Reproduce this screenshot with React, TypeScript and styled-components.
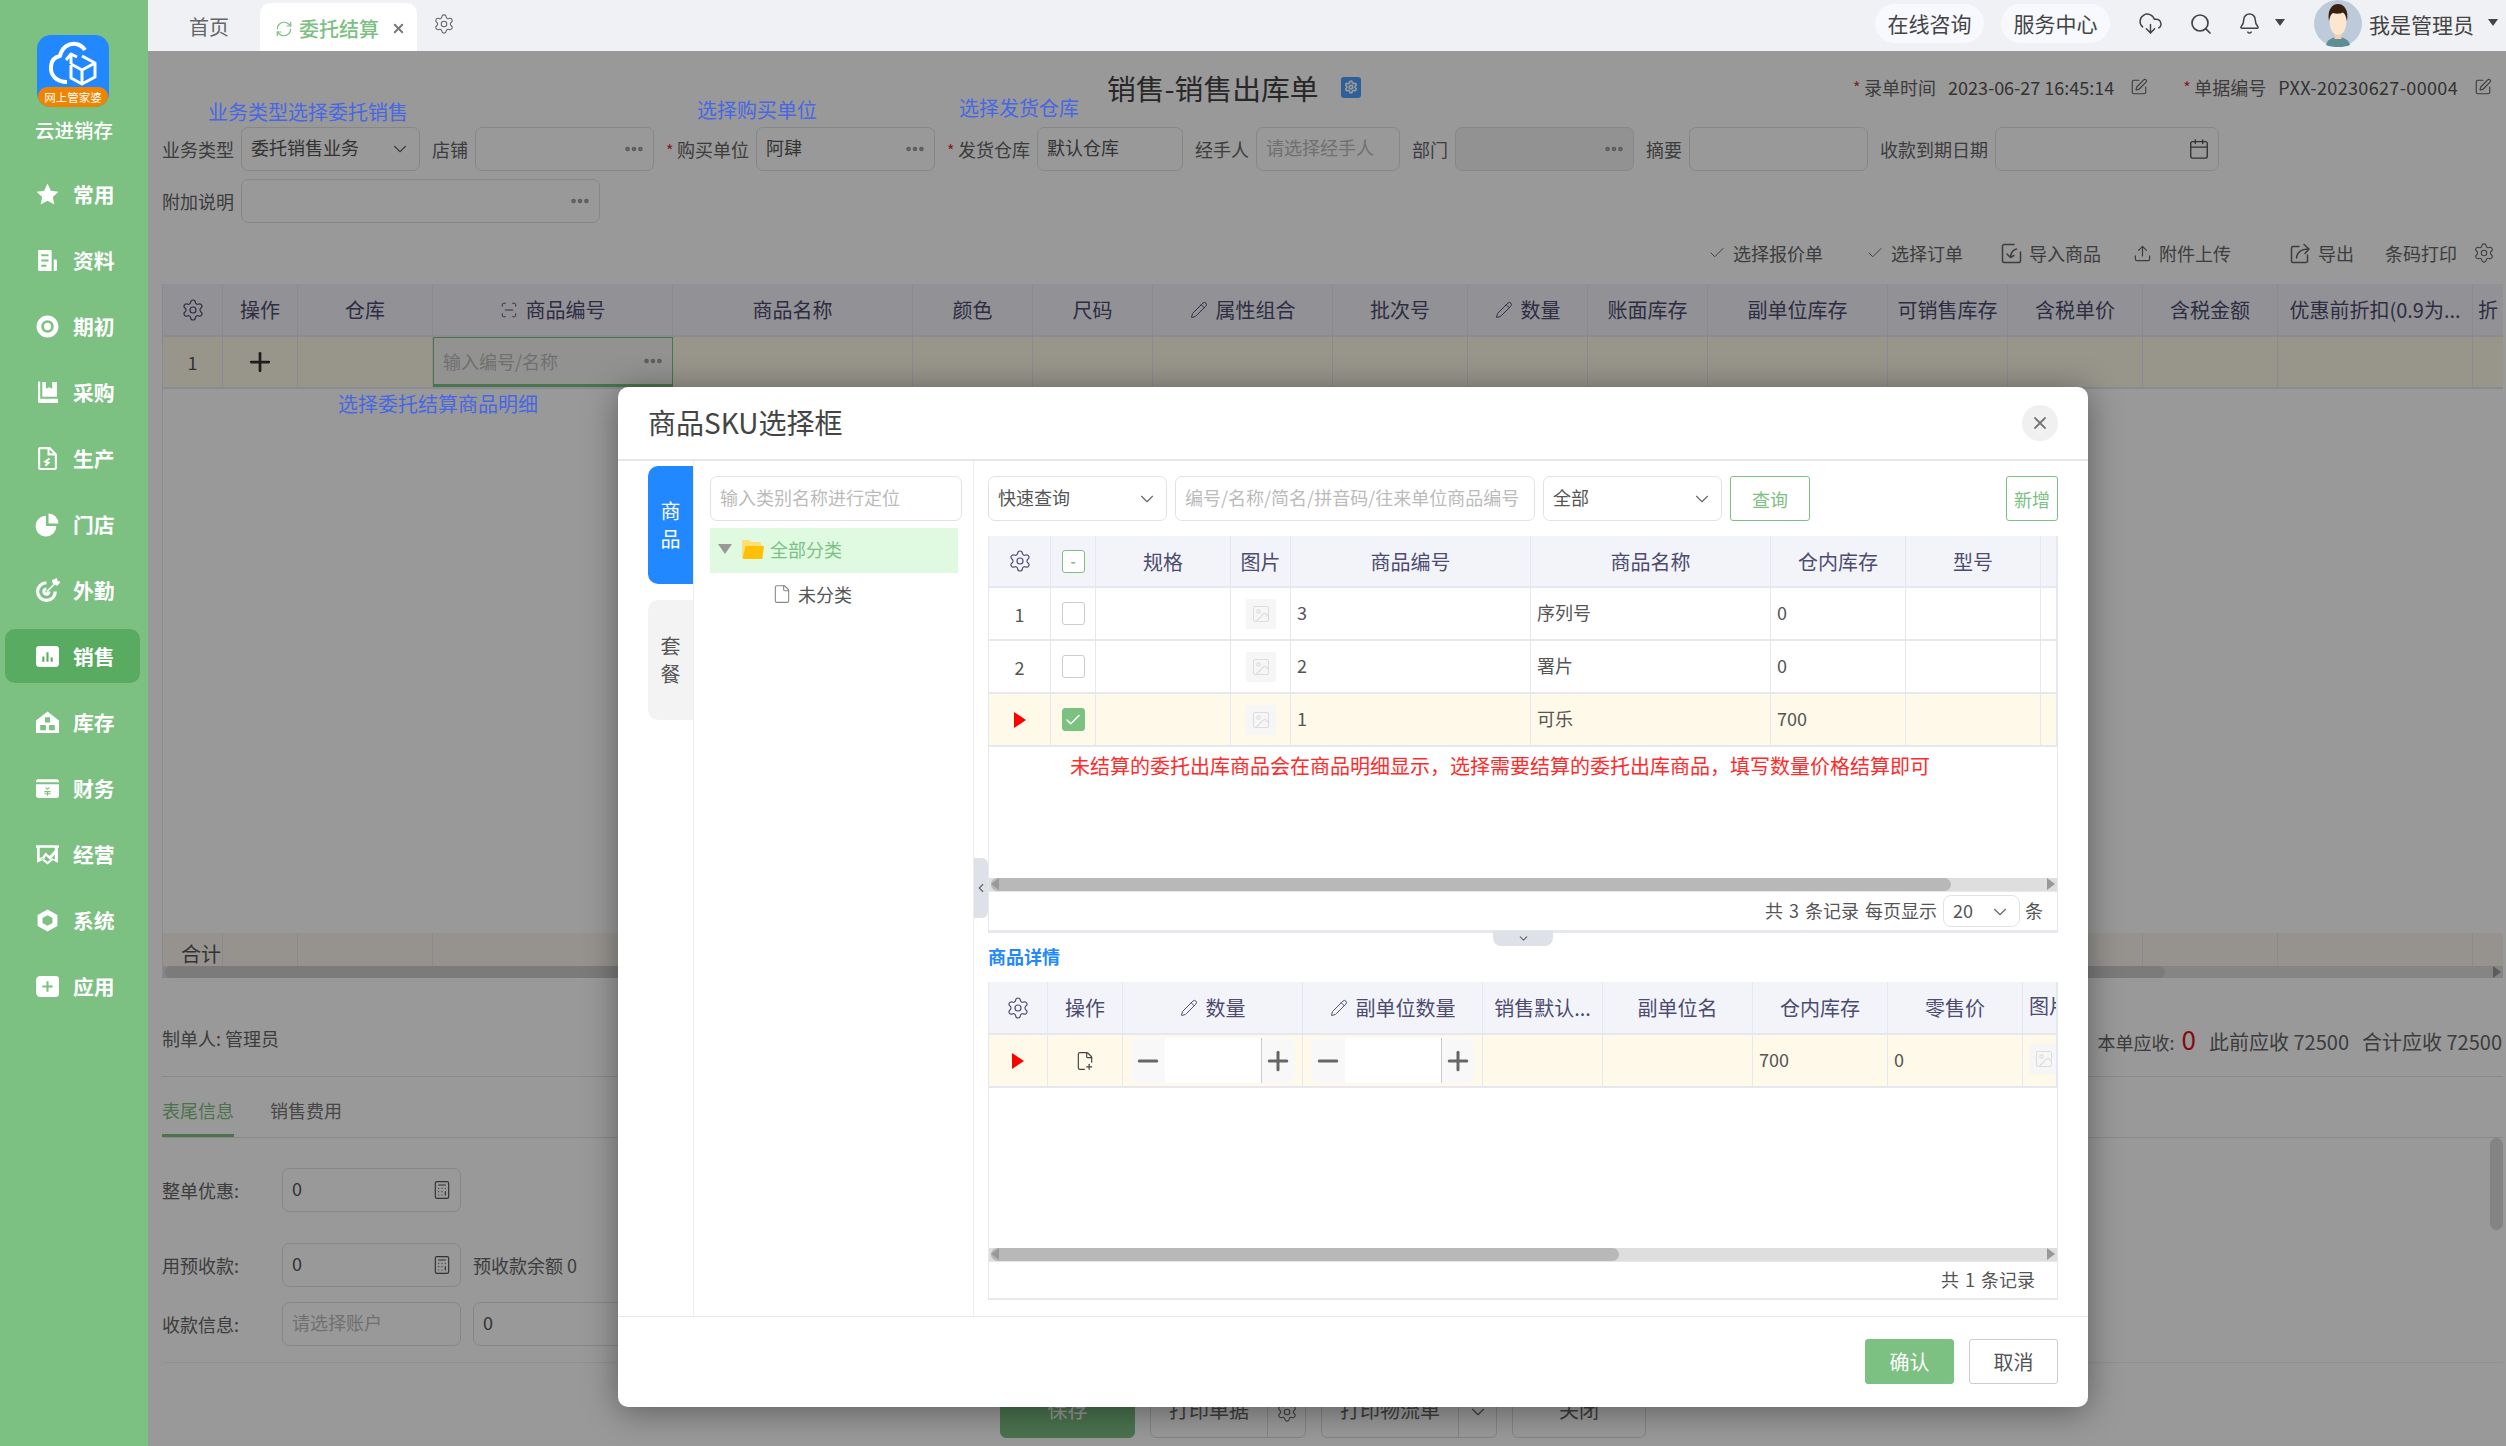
import React, { FC, ReactNode } from 'react'
import styled, { createGlobalStyle } from 'styled-components'
import {
  Bell,
  Calculator,
  Calendar,
  Check,
  ChevronDown,
  ChevronLeft,
  CloudDownload,
  Ellipsis,
  File,
  FilePlus2,
  Image,
  Minus,
  Pencil,
  Plus,
  RefreshCw,
  ScanLine,
  Search,
  Settings,
  SquarePen,
  Upload,
  X,
} from 'lucide-react'

const green = '#7cc082'
const blue = '#2288ff'

const GlobalStyle = createGlobalStyle`
  html, body { margin: 0; padding: 0; height: 100%; }
  body {
    font-family: "Noto Sans CJK SC", "Liberation Sans", sans-serif;
    font-size: 18px;
    color: #555;
    background: #fff;
    overflow: hidden;
  }
  * { box-sizing: border-box; }
`

const Shell = styled.div`
  display: flex;
  width: 2506px;
  height: 1446px;
  overflow: hidden;
`

/* ---------- sidebar ---------- */

const Sidebar = styled.aside`
  flex: 0 0 148px;
  background: ${green};
  padding-top: 35px;
  color: #fff;
`

const Logo = styled.div`
  position: relative;
  width: 72px;
  height: 72px;
  margin-left: 37px;
  border-radius: 14px;
  background: ${blue};
  overflow: hidden;
`

const LogoBand = styled.div`
  position: absolute;
  left: 1px;
  right: 1px;
  bottom: 0;
  height: 20px;
  border-radius: 12px 12px 14px 14px;
  background: #f08300;
  font-size: 11.5px;
  line-height: 20px;
  text-align: center;
  white-space: nowrap;
`

const BrandName = styled.div`
  margin-top: 9px;
  height: 28px;
  line-height: 28px;
  text-align: center;
  font-size: 19.5px;
  font-weight: 500;
`

const Nav = styled.nav`
  margin-top: 23px;
`

const NavItem = styled.div<{ $active?: boolean }>`
  display: flex;
  align-items: center;
  gap: 13px;
  height: 54px;
  margin: 0 8px 12px 5px;
  padding-left: 30px;
  border-radius: 10px;
  background: ${(p) => (p.$active ? '#58ab60' : 'transparent')};
  font-size: 20.8px;
  font-weight: 700;
`

const NavSvg = styled.svg`
  width: 25px;
  height: 25px;
  fill: #fff;
  fill-rule: evenodd;
  flex: none;
`

const navItems: { name: string; icon: ReactNode; active?: boolean }[] = [
  { name: '常用', icon: <path d="M12 1.5l3.2 7 7.3.8-5.4 5 1.5 7.4L12 18l-6.6 3.7 1.5-7.4-5.4-5 7.3-.8z" /> },
  { name: '资料', icon: <path d="M3 2h12a1 1 0 011 1v19H4a1 1 0 01-1-1zM6 6v2h7V6zM6 11v2h7v-2zM6 16v2h5v-2zM18 11h2a1 1 0 011 1v9a1 1 0 01-1 1h-2z" /> },
  { name: '期初', icon: <path d="M12 1.5a10.5 10.5 0 100 21 10.5 10.5 0 000-21zM12 6a6 6 0 110 12 6 6 0 010-12zM12 8.5a3.5 3.5 0 100 7 3.5 3.5 0 000-7z" /> },
  { name: '采购', icon: <path d="M3 1.5h2V18h17v4H4a1 1 0 01-1-1zM7 2h14v14H7zM10.5 2v6.5l3-1.5 3 1.5V2z" /> },
  {
    name: '生产',
    icon: (
      <g fill="none" stroke="#fff" strokeWidth="2">
        <path d="M5 2h9l6 6v13a1 1 0 01-1 1H5a1 1 0 01-1-1V3a1 1 0 011-1z" />
        <path d="M13 2v6h7M14 12l-4 3 3 1-3 3" />
      </g>
    ),
  },
  { name: '门店', icon: <path d="M10.5 3.5v10h10A10 10 0 1110.5 3.5zM13 1.5a9.5 9.5 0 019.5 9.5H13z" /> },
  {
    name: '外勤',
    icon: (
      <g>
        <path d="M11 3a10 10 0 1010 10h-3a7 7 0 11-7-7zM11 9a4 4 0 104 4h-3a1 1 0 11-1-1z" />
        <path d="M11.5 13L19 5.5M17 2.5l1 3 3 1 2.5-2.5-2.5-.5-.5-2.5z" stroke="#fff" strokeWidth="1.5" />
      </g>
    ),
  },
  { name: '销售', active: true, icon: <path d="M4 2h16a3 3 0 013 3v14a3 3 0 01-3 3H4a3 3 0 01-3-3V5a3 3 0 013-3zM7 12v5h2v-5zM11 8v9h2V8zM15 13v4h2v-4z" /> },
  { name: '库存', icon: <path d="M12 1.5l11 8.5v12H1V10zM9.5 7v5h5V7zM5 14.5v5h5.5v-5zM13.5 14.5v5H19v-5z" /> },
  { name: '财务', icon: <path d="M3 3h18a2 2 0 012 2v1H1V5a2 2 0 012-2zM1 8h22v11a2 2 0 01-2 2H3a2 2 0 01-2-2zM9.5 11l2.5 2.5 2.5-2.5H13l-1 1-1-1zM9 14.5v1h2.5v1H9v1h2.5V19h1v-1.5H15v-1h-2.5v-1H15v-1z" /> },
  { name: '经营', icon: <path d="M1 3h22v2.5H22V20l-5-2.5-5 4-5-4-5 2.5V5.500H1zM4.500 5.500v10l3-1.500 2.500-4 4 3.500 5-5.500V5.500zM5 16.800l2.500-1.300 4.500 3.500 4.500-3.500 2.500 1.300V12l-4.500 5-4-3.500-2 3z" /> },
  { name: '系统', icon: <path d="M12 1.500l9.500 5.250v10.500L12 22.500l-9.500-5.250V6.750zM12 7l-4.800 2.600v4.800L12 17l4.800-2.600V9.600z" /> },
  { name: '应用', icon: <path d="M5 2h15a3 3 0 013 3v14a3 3 0 01-3 3H5a4 4 0 01-4-4V6a4 4 0 014-4zM11 7v4H7v2h4v4h2v-4h4v-2h-4V7z" /> },
]

/* ---------- top bar ---------- */

const Main = styled.div`
  flex: 1;
  min-width: 0;
  display: flex;
  flex-direction: column;
`

const TopBar = styled.header`
  flex: 0 0 51px;
  min-height: 0;
  display: flex;
  align-items: stretch;
  padding-right: 8px;
  background: #f0f1f5;
  color: #444;
  font-size: 20px;
`

const HomeTab = styled.div`
  width: 112px;
  padding: 10px 0 0 41px;
  line-height: 34px;
  color: #666;
`

const ActiveTab = styled.div`
  display: flex;
  align-items: center;
  width: 157px;
  margin-top: 3px;
  padding: 3px 0 0 15px;
  border-radius: 10px 10px 0 0;
  background: #fff;
  color: ${green};
  font-weight: 500;
`

const TabTitle = styled.span`
  margin: 0 12px 0 6px;
`

const TabGear = styled.div`
  margin: 12px 0 0 16px;
  color: #666;
`

const TopRight = styled.div`
  display: flex;
  align-items: center;
  margin-left: auto;
  font-size: 21px;
  color: #444;
`

const Pill = styled.div`
  width: 109px;
  height: 39px;
  margin: 0 17px 4px 0;
  border-radius: 20px;
  background: #f7f9ff;
  line-height: 38px;
  text-align: center;
`

const UserName = styled.span`
  margin-bottom: 4px;
`

const TopIcon = styled.div<{ $ml: number }>`
  display: flex;
  margin: 0 0 4px ${(p) => p.$ml}px;
  color: #444;
`

const Caret = styled.span<{ $ml: number }>`
  margin: 0 0 6px ${(p) => p.$ml}px;
  border-left: 5px solid transparent;
  border-right: 5px solid transparent;
  border-top: 7px solid #444;
`

const Avatar = styled.svg`
  width: 48px;
  height: 47px;
  margin: 0 7px 4px 29px;
  flex: none;
`

/* ---------- page under the dialog ---------- */

const Content = styled.main`
  position: relative;
  flex: 1;
  min-height: 0;
  overflow: hidden;
`

const Sheet = styled.div`
  display: flex;
  flex-direction: column;
  height: 100%;
  padding: 0 3px 0 14px;
`

const TitleRow = styled.div`
  display: flex;
  align-items: center;
  height: 40px;
  margin-top: 16px;
`

const PageTitle = styled.h1`
  margin: 0 0 0 945px;
  font-size: 28.8px;
  font-weight: 400;
  color: #444;
`

const TitleBadge = styled.div`
  display: flex;
  align-items: center;
  justify-content: center;
  width: 20px;
  height: 21px;
  margin-left: 22px;
  border-radius: 3px;
  background: #4f9eff;
  color: #fff;
`

const Meta = styled.div`
  display: flex;
  align-items: center;
  margin-left: auto;
  padding-right: 11px;
  color: #666;
`

const Star = styled.span`
  display: inline-block;
  width: 11px;
  color: #e03030;
  font-size: 16px;
`

const MetaValue = styled.span<{ $track?: number }>`
  margin: 0 16px 0 12px;
  color: #555;
  letter-spacing: ${(p) => p.$track ?? 0}px;
`

const MetaEdit = styled.span<{ $mr?: number }>`
  display: flex;
  margin-right: ${(p) => p.$mr ?? 0}px;
  color: #666;
`

const FormRow = styled.div<{ $mt: number }>`
  display: flex;
  align-items: center;
  gap: 12px;
  margin-top: ${(p) => p.$mt}px;
`

const FormField = styled.div`
  display: flex;
  align-items: center;
  gap: 7px;
`

const Label = styled.label`
  white-space: nowrap;
  color: #666;
`

const Input = styled.div<{ $w: number; $off?: boolean; $h?: number }>`
  display: flex;
  align-items: center;
  justify-content: space-between;
  width: ${(p) => p.$w}px;
  height: ${(p) => p.$h ?? 44}px;
  padding: 0 8px 4px 9px;
  border: 1px solid #e2e2e2;
  border-radius: 7px;
  background: ${(p) => (p.$off ? '#f3f3f3' : '#fff')};
  color: #555;
  white-space: nowrap;
`

const Hint = styled.span`
  color: #bbb;
`

const IconTail = styled.span`
  display: flex;
  margin-top: 4px;
  color: #888;
`

const ToolBar = styled.div`
  display: flex;
  align-items: center;
  justify-content: flex-end;
  height: 30px;
  margin: 15px 0 16px;
  padding-right: 8px;
  color: #666;
`

const ToolItem = styled.div<{ $ml: number }>`
  display: flex;
  align-items: center;
  gap: 7px;
  margin-left: ${(p) => p.$ml}px;
`

const ToolSvg = styled.svg`
  width: 21px;
  height: 21px;
  fill: none;
  stroke: currentColor;
  stroke-width: 1.5;
  stroke-linecap: round;
  stroke-linejoin: round;
`

const GridBox = styled.div`
  position: relative;
  flex: 0 0 694px;
  display: flex;
  flex-direction: column;
  border-left: 1px solid #e4e6ee;
  overflow: hidden;
`

const Row = styled.div<{ $h: number; $tone?: 'head' | 'current' | 'total' }>`
  flex: 0 0 ${(p) => p.$h}px;
  display: flex;
  background: ${(p) =>
    p.$tone === 'head' ? '#f3f4fa' : p.$tone === 'current' ? '#fef9e8' : p.$tone === 'total' ? '#faf6ef' : '#fff'};
  border-bottom: 2px solid #e6e8f0;
`

const Cell = styled.div<{ $w: number; $head?: boolean; $left?: boolean }>`
  flex: 0 0 ${(p) => p.$w}px;
  display: flex;
  align-items: center;
  justify-content: ${(p) => (p.$left ? 'flex-start' : 'center')};
  gap: 8px;
  padding: ${(p) => (p.$left ? '0 0 4px 6px' : '0')};
  border-right: 1px solid #e6e8f0;
  overflow: hidden;
  white-space: nowrap;
  color: ${(p) => (p.$head ? '#4d4c70' : '#555')};
  font-size: ${(p) => (p.$head ? 20 : 18)}px;
`

const GridFill = styled.div`
  flex: 1;
`

const CodeEditor = styled.div`
  flex: 0 0 240px;
  display: flex;
  align-items: center;
  justify-content: space-between;
  padding: 0 8px 0 9px;
  border: 1px solid ${green};
  border-bottom-width: 3px;
  color: #bbb;
  background: #f3f3f0;
`

const TotalLabel = styled.div`
  flex: 0 0 60px;
  padding: 6px 0 0 18px;
  border-right: 1px solid #e6e8f0;
  white-space: nowrap;
  color: #555;
  font-size: 20px;
`

const Track = styled.div<{ $h?: number }>`
  position: relative;
  flex: 0 0 ${(p) => p.$h ?? 13}px;
  height: ${(p) => p.$h ?? 13}px;
  background: #dedede;
`

const Thumb = styled.div<{ $w: number; $tone?: string }>`
  width: ${(p) => p.$w}px;
  height: 100%;
  margin-left: 2px;
  border-radius: 7px;
  background: ${(p) => p.$tone ?? '#b8b8b8'};
`

const TrackArrow = styled.span<{ $side: 'left' | 'right' }>`
  position: absolute;
  top: 0;
  ${(p) => p.$side}: 2px;
  border-top: 6.5px solid transparent;
  border-bottom: 6.5px solid transparent;
  ${(p) => (p.$side === 'left' ? 'border-right' : 'border-left')}: 8px solid #999;
`

const MainScroll = styled.div`
  position: absolute;
  left: 0;
  right: 0;
  bottom: 0;
`

const Summary = styled.div`
  flex: 0 0 99px;
  display: flex;
  align-items: center;
  justify-content: space-between;
  padding: 22px 1px 0 0;
  border-bottom: 1px solid #e4e4e4;
  color: #666;
`

const SummaryRight = styled.span`
  font-size: 20px;
`

const OwedLabel = styled.span`
  font-size: 18px;
`

const Owed = styled.span`
  margin: 0 13px 0 7px;
  color: #e01020;
  font-size: 26px;
`

const SummaryNote = styled.span`
  margin-left: 13px;
`

const Tabs = styled.div`
  flex: 0 0 60px;
  display: flex;
  gap: 36px;
  border-bottom: 1px solid #e4e4e4;
`

const Tab = styled.div<{ $active?: boolean }>`
  height: 60px;
  padding-top: 20px;
  border-bottom: 3px solid ${(p) => (p.$active ? green : 'transparent')};
  color: ${(p) => (p.$active ? green : '#777')};
`

const FootForm = styled.div`
  position: relative;
  flex: 0 0 224px;
  padding-top: 30px;
`

const FootRow = styled.div<{ $mb: number }>`
  display: flex;
  align-items: center;
  margin-bottom: ${(p) => p.$mb}px;
`

const FootLabel = styled(Label)`
  flex: 0 0 120px;
`

const FootText = styled.span`
  margin-left: 12px;
  color: #666;
`

const SideThumb = styled.div`
  position: absolute;
  top: 0;
  right: 0;
  width: 13px;
  height: 92px;
  border-radius: 7px;
  background: #ddd;
`

const ActionBar = styled.div`
  flex: 1;
  display: flex;
  align-items: flex-start;
  gap: 15px;
  padding: 23px 0 0 838px;
  border-top: 1px solid #f2f2f2;
`

const ActionButton = styled.div<{ $w: number; $primary?: boolean }>`
  display: flex;
  align-items: center;
  justify-content: center;
  width: ${(p) => p.$w}px;
  height: 52px;
  border: 1px solid ${(p) => (p.$primary ? green : '#ddd')};
  border-radius: 6px;
  background: ${(p) => (p.$primary ? green : '#fff')};
  color: ${(p) => (p.$primary ? '#fff' : '#666')};
  font-size: 20px;
`

const ActionMain = styled.span`
  flex: 1;
  padding-bottom: 6px;
  text-align: center;
`

const ActionSide = styled.span`
  display: flex;
  align-items: center;
  justify-content: center;
  width: 38px;
  height: 100%;
  border-left: 1px solid #ddd;
`

const Scrim = styled.div`
  position: absolute;
  inset: 0;
  background: rgba(0, 0, 0, 0.4);
`

const Note = styled.div<{ $x: number; $y: number }>`
  position: absolute;
  left: ${(p) => p.$x}px;
  top: ${(p) => p.$y}px;
  color: #4767e3;
  font-size: 20px;
  line-height: 28px;
  white-space: nowrap;
`

/* ---------- dialog ---------- */

const Dialog = styled.section`
  position: absolute;
  left: 470px;
  top: 336px;
  width: 1470px;
  height: 1020px;
  display: flex;
  flex-direction: column;
  border-radius: 10px;
  background: #fff;
  box-shadow: 0 4px 34px rgba(0, 0, 0, 0.4);
`

const DialogHead = styled.div`
  flex: 0 0 74px;
  display: flex;
  align-items: center;
  justify-content: space-between;
  padding: 0 30px;
  border-bottom: 2px solid #e6e6e6;
`

const DialogTitle = styled.h2`
  margin: 0 0 2px;
  font-size: 28px;
  font-weight: 400;
  color: #444;
`

const CloseButton = styled.div`
  display: flex;
  align-items: center;
  justify-content: center;
  width: 36px;
  height: 36px;
  border-radius: 50%;
  background: #f0f0f0;
  color: #777;
`

const DialogBody = styled.div`
  flex: 1;
  min-height: 0;
  display: flex;
`

const Rail = styled.div`
  flex: 0 0 75px;
  padding: 5px 0 0 30px;
  border-right: 1px solid #eee;
`

const RailTab = styled.div<{ $active?: boolean }>`
  display: flex;
  flex-direction: column;
  align-items: center;
  justify-content: center;
  gap: 8px;
  width: 45px;
  height: ${(p) => (p.$active ? 118 : 120)}px;
  margin-bottom: 16px;
  border-radius: 10px 0 0 10px;
  background: ${(p) => (p.$active ? blue : '#f3f3f3')};
  color: ${(p) => (p.$active ? '#fff' : '#555')};
  font-size: 20px;
  line-height: 20px;
`

const TreePane = styled.div`
  flex: 0 0 280px;
  min-width: 0;
  padding: 15px 0 15px 16px;
  border-right: 1px solid #eee;
`

const TreeRow = styled.div<{ $selected?: boolean }>`
  display: flex;
  align-items: center;
  width: 248px;
  height: 45px;
  padding: 0 0 3px ${(p) => (p.$selected ? 8 : 62)}px;
  background: ${(p) => (p.$selected ? '#e0fae2' : 'transparent')};
  color: ${(p) => (p.$selected ? green : '#555')};
`

const TreeSearch = styled(Input)`
  margin-bottom: 7px;
`

const TreeArrow = styled.span`
  margin: 0 10px 0 0;
  border-left: 7px solid transparent;
  border-right: 7px solid transparent;
  border-top: 10px solid #999;
`

const TreeLabel = styled.span`
  margin-left: 6px;
`

const RightPane = styled.div`
  position: relative;
  flex: 1;
  min-width: 0;
  padding: 15px 30px 0 14px;
`

const SideHandle = styled.div`
  position: absolute;
  left: 0;
  top: 397px;
  display: flex;
  align-items: center;
  justify-content: center;
  width: 14px;
  height: 60px;
  border-radius: 0 6px 6px 0;
  background: #dfe1e8;
  color: #666;
`

const Filters = styled.div`
  display: flex;
  align-items: center;
  gap: 8px;
  margin-bottom: 15px;
`

const GhostButton = styled.div<{ $w: number }>`
  display: flex;
  align-items: center;
  justify-content: center;
  width: ${(p) => p.$w}px;
  height: 45px;
  border: 1px solid ${green};
  border-radius: 3px;
  color: ${green};
`

const Spacer = styled.div`
  flex: 1;
`

const Panel = styled.div<{ $h: number }>`
  display: flex;
  flex-direction: column;
  height: ${(p) => p.$h}px;
  border-left: 1px solid #e6e8f0;
  border-right: 1px solid #e6e8f0;
  overflow: hidden;
`

const RedNote = styled.div`
  padding: 5px 0 0 81px;
  color: #ff2b2b;
  font-size: 20px;
  line-height: 28px;
  white-space: nowrap;
`

const PagerRow = styled.div<{ $h: number }>`
  flex: 0 0 ${(p) => p.$h}px;
  display: flex;
  align-items: center;
  justify-content: flex-end;
  gap: 5px;
  padding: 0 14px 3px 0;
  border-top: 1px solid #e6e8f0;
  color: #555;
  word-spacing: 2px;
`

const RecordCount = styled(PagerRow)`
  padding-right: 22px;
  border-bottom: 2px solid #e6e8f0;
`

const PageSize = styled(Input)`
  margin: 3px 0 0 1px;
  padding-bottom: 2px;
  border-radius: 8px;
`

const DetailHead = styled.div`
  position: relative;
  height: 52px;
  padding-top: 10px;
  border-top: 3px solid #e6e8f0;
  color: ${blue};
  font-weight: 700;
  line-height: 26px;
`

const DownHandle = styled.div`
  position: absolute;
  left: 505px;
  top: -2px;
  display: flex;
  align-items: center;
  justify-content: center;
  width: 60px;
  height: 15px;
  border-radius: 0 0 8px 8px;
  background: #dfe1e8;
  color: #666;
`

const Box = styled.span<{ $on?: boolean; $dash?: boolean }>`
  display: flex;
  align-items: center;
  justify-content: center;
  width: 23px;
  height: 23px;
  border: 1px solid ${(p) => (p.$on || p.$dash ? green : '#ccc')};
  border-radius: 3px;
  background: ${(p) => (p.$on ? green : '#fff')};
  color: ${(p) => (p.$on ? '#fff' : green)};
  font-size: 14px;
  font-weight: 700;
`

const Pointer = styled.span`
  border-top: 8px solid transparent;
  border-bottom: 8px solid transparent;
  border-left: 12px solid #ff0000;
`

const Thumbnail = styled.span`
  display: flex;
  align-items: center;
  justify-content: center;
  flex: none;
  width: 30px;
  height: 30px;
  background: #f6f6f6;
  color: #ddd;
`

const Stepper = styled.div`
  display: flex;
  width: 164px;
  height: 45px;
  border-radius: 8px;
  overflow: hidden;
  background: #fff;
  color: #666;
`

const StepButton = styled.span<{ $plus?: boolean }>`
  flex: 0 0 34px;
  display: flex;
  align-items: center;
  justify-content: center;
  background: #f8f8f8;
  border-left: ${(p) => (p.$plus ? '1px solid #ccc' : '0')};
`

const StepValue = styled.span`
  flex: 1;
`

const DialogFoot = styled.div`
  flex: 0 0 91px;
  display: flex;
  justify-content: flex-end;
  gap: 15px;
  padding: 22px 30px 0 0;
  border-top: 1px solid #e6e6f4;
`

const FootButton = styled.div<{ $primary?: boolean }>`
  display: flex;
  align-items: center;
  justify-content: center;
  width: 89px;
  height: 45px;
  border: 1px solid ${(p) => (p.$primary ? green : '#ccc')};
  border-radius: 3px;
  background: ${(p) => (p.$primary ? green : '#fff')};
  color: ${(p) => (p.$primary ? '#fff' : '#555')};
  font-size: 20px;
`

const Gear: FC<{ size?: number }> = ({ size = 24 }) => <Settings size={size} strokeWidth={1.2} />
const Dots: FC = () => <Ellipsis size={22} strokeWidth={3} color="#999" />
const Chevron: FC = () => <ChevronDown size={22} strokeWidth={1.2} color="#666" />
const Pen: FC = () => <Pencil size={18} strokeWidth={1.3} />

const ImportIcon: FC = () => (
  <ToolSvg viewBox="0 0 21 21">
    <path d="M13 1.500H3A1.500 1.500 0 001.500 3v15A1.500 1.500 0 003 19.500h15a1.500 1.500 0 001.500-1.500V9" />
    <path d="M15.500 6c-3.500.8-5.500 3.500-6 8M6 11l3.500 3.500 3.500-2" />
  </ToolSvg>
)

const ExportIcon: FC = () => (
  <ToolSvg viewBox="0 0 21 21">
    <path d="M9 3.500H3A1.500 1.500 0 001.500 5v13A1.500 1.500 0 003 19.500h13a1.500 1.500 0 001.500-1.500v-6" />
    <path d="M6.500 15c.5-5.500 4-8.500 11-9M14 1.500l5 4.500-4 4.500" />
  </ToolSvg>
)

const FolderIcon: FC = () => (
  <svg width="22" height="20" viewBox="0 0 22 20">
    <path d="M0 2a1 1 0 011-1h6l2 2h9a1 1 0 011 1v3H3L1 18H0z" fill="#ffdf70" />
    <path d="M3.500 7H21a1 1 0 011 1l-1.500 11a1 1 0 01-1 1H1.500a1 1 0 01-1-1z" fill="#ffc107" />
  </svg>
)

const pageCols: { t?: string; w: number; icon?: ReactNode }[] = [
  { w: 60, icon: <Gear /> },
  { w: 75, t: '操作' },
  { w: 135, t: '仓库' },
  { w: 240, t: '商品编号', icon: <ScanLine size={18} strokeWidth={1.3} /> },
  { w: 240, t: '商品名称' },
  { w: 120, t: '颜色' },
  { w: 120, t: '尺码' },
  { w: 180, t: '属性组合', icon: <Pen /> },
  { w: 135, t: '批次号' },
  { w: 120, t: '数量', icon: <Pen /> },
  { w: 120, t: '账面库存' },
  { w: 180, t: '副单位库存' },
  { w: 120, t: '可销售库存' },
  { w: 135, t: '含税单价' },
  { w: 135, t: '含税金额' },
  { w: 195, t: '优惠前折扣(0.9为...' },
  { w: 31, t: '折' },
]

const skuCols = [62, 45, 135, 60, 240, 240, 135, 135, 16]
const detailCols = [59, 75, 180, 180, 120, 150, 135, 135, 34]

const skuRows = [
  { no: '1', code: '3', name: '序列号', stock: '0' },
  { no: '2', code: '2', name: '署片', stock: '0' },
  { no: '', code: '1', name: '可乐', stock: '700', current: true },
]

const HeadCells: FC<{ cols: { t?: string; w: number; icon?: ReactNode }[] }> = ({ cols }) => (
  <>
    {cols.map((c, i) => (
      <Cell key={i} $w={c.w} $head>
        {c.icon}
        {c.t}
      </Cell>
    ))}
  </>
)

const Scroll: FC<{ thumb: number }> = ({ thumb }) => (
  <Track>
    <Thumb $w={thumb} />
    <TrackArrow $side="left" />
    <TrackArrow $side="right" />
  </Track>
)

const Picture: FC = () => (
  <Thumbnail>
    <Image size={20} strokeWidth={1.3} />
  </Thumbnail>
)

const StepInput: FC = () => (
  <Stepper>
    <StepButton>
      <Minus size={30} strokeWidth={2.4} />
    </StepButton>
    <StepValue />
    <StepButton $plus>
      <Plus size={30} strokeWidth={2.4} />
    </StepButton>
  </Stepper>
)

const App: FC = () => {
  const d = detailCols
  return (
    <Shell>
      <GlobalStyle />
      <Sidebar>
        <Logo>
          <svg width="72" height="72" viewBox="0 0 72 72" fill="none" stroke="#fff" strokeWidth="4" strokeLinejoin="round">
            <path d="M30 47C20 47 13 41 14 31c.5-6 4-9 9-10 2-9 9-13 16-12 4 .7 7 3 9 6" />
            <path d="M45 21l13 7v14l-13 7-11-6V30" strokeWidth="3" />
            <path d="M34 29l11 6 13-7M45 35v14M29 25l5-6 6 3M34 19v10" strokeWidth="3" />
          </svg>
          <LogoBand>网上管家婆</LogoBand>
        </Logo>
        <BrandName>云进销存</BrandName>
        <Nav>
          {navItems.map((n) => (
            <NavItem key={n.name} $active={n.active}>
              <NavSvg viewBox="0 0 24 24">{n.icon}</NavSvg>
              {n.name}
            </NavItem>
          ))}
        </Nav>
      </Sidebar>
      <Main>
        <TopBar>
          <HomeTab>首页</HomeTab>
          <ActiveTab>
            <RefreshCw size={18} strokeWidth={1.6} />
            <TabTitle>委托结算</TabTitle>
            <X size={15} strokeWidth={3} color="#777" />
          </ActiveTab>
          <TabGear>
            <Gear size={22} />
          </TabGear>
          <TopRight>
            <Pill>在线咨询</Pill>
            <Pill>服务中心</Pill>
            <TopIcon $ml={11}>
              <CloudDownload size={25} strokeWidth={1.4} />
            </TopIcon>
            <TopIcon $ml={26}>
              <Search size={24} strokeWidth={1.7} />
            </TopIcon>
            <TopIcon $ml={25}>
              <Bell size={23} strokeWidth={1.6} />
            </TopIcon>
            <Caret $ml={14} />
            <Avatar viewBox="0 0 48 47">
              <ellipse cx="24" cy="23.500" rx="24" ry="23.500" fill="#bccada" />
              <path d="M12 45c1-5 6-8 12-8s11 3 12 8c-3 1.500-8 2-12 2s-9-.5-12-2z" fill="#5f8d96" />
              <rect x="20.500" y="30" width="7" height="9" fill="#f2cfb0" />
              <ellipse cx="24" cy="22" rx="8.500" ry="13" fill="#fde6cf" />
              <path d="M15 21C13 10 18 4 24 4s11 6 9 17c-1-4-1.500-7-4-8.500-3 1.500-7 1.500-10 .5-2.500 1.500-3 4-4 8z" fill="#3a2010" />
            </Avatar>
            <UserName>我是管理员</UserName>
            <Caret $ml={14} />
          </TopRight>
        </TopBar>
        <Content>
          <Sheet>
            <TitleRow>
              <PageTitle>销售-销售出库单</PageTitle>
              <TitleBadge>
                <Settings size={14} strokeWidth={3} />
              </TitleBadge>
              <Meta>
                <Star>*</Star>录单时间
                <MetaValue>2023-06-27 16:45:14</MetaValue>
                <MetaEdit $mr={35}>
                  <SquarePen size={18} strokeWidth={1.5} />
                </MetaEdit>
                <Star>*</Star>单据编号
                <MetaValue $track={0.35}>PXX-20230627-00004</MetaValue>
                <MetaEdit>
                  <SquarePen size={18} strokeWidth={1.5} />
                </MetaEdit>
              </Meta>
            </TitleRow>
            <FormRow $mt={20}>
              <FormField>
                <Label>业务类型</Label>
                <Input $w={179}>
                  委托销售业务
                  <IconTail>
                    <Chevron />
                  </IconTail>
                </Input>
              </FormField>
              <FormField>
                <Label>店铺</Label>
                <Input $w={179}>
                  <span />
                  <IconTail>
                    <Dots />
                  </IconTail>
                </Input>
              </FormField>
              <FormField>
                <Label>
                  <Star>*</Star>购买单位
                </Label>
                <Input $w={179}>
                  阿肆
                  <IconTail>
                    <Dots />
                  </IconTail>
                </Input>
              </FormField>
              <FormField>
                <Label>
                  <Star>*</Star>发货仓库
                </Label>
                <Input $w={146}>默认仓库</Input>
              </FormField>
              <FormField>
                <Label>经手人</Label>
                <Input $w={144}>
                  <Hint>请选择经手人</Hint>
                </Input>
              </FormField>
              <FormField>
                <Label>部门</Label>
                <Input $w={179} $off>
                  <span />
                  <IconTail>
                    <Dots />
                  </IconTail>
                </Input>
              </FormField>
              <FormField>
                <Label>摘要</Label>
                <Input $w={179} />
              </FormField>
              <FormField>
                <Label>收款到期日期</Label>
                <Input $w={224}>
                  <span />
                  <IconTail>
                    <Calendar size={22} strokeWidth={1.5} color="#555" />
                  </IconTail>
                </Input>
              </FormField>
            </FormRow>
            <FormRow $mt={8}>
              <FormField>
                <Label>附加说明</Label>
                <Input $w={359}>
                  <span />
                  <IconTail>
                    <Dots />
                  </IconTail>
                </Input>
              </FormField>
            </FormRow>
            <ToolBar>
              <ToolItem $ml={0}>
                <Check size={18} strokeWidth={1.3} />
                选择报价单
              </ToolItem>
              <ToolItem $ml={43}>
                <Check size={18} strokeWidth={1.3} />
                选择订单
              </ToolItem>
              <ToolItem $ml={38}>
                <ImportIcon />
                导入商品
              </ToolItem>
              <ToolItem $ml={32}>
                <Upload size={19} strokeWidth={1.5} />
                附件上传
              </ToolItem>
              <ToolItem $ml={59}>
                <ExportIcon />
                导出
              </ToolItem>
              <ToolItem $ml={31}>条码打印</ToolItem>
              <ToolItem $ml={16}>
                <Gear size={22} />
              </ToolItem>
            </ToolBar>
            <GridBox>
              <Row $h={53} $tone="head">
                <HeadCells cols={pageCols} />
              </Row>
              <Row $h={52} $tone="current">
                <Cell $w={60}>1</Cell>
                <Cell $w={75}>
                  <Plus size={30} strokeWidth={2.2} color="#333" />
                </Cell>
                <Cell $w={135} />
                <CodeEditor>
                  输入编号/名称
                  <Dots />
                </CodeEditor>
                {pageCols.slice(4).map((c, i) => (
                  <Cell key={i} $w={c.w} />
                ))}
              </Row>
              <GridFill />
              <Row $h={45} $tone="total">
                <TotalLabel>合计</TotalLabel>
                {pageCols.slice(1).map((c, i) => (
                  <Cell key={i} $w={c.w} />
                ))}
              </Row>
              <MainScroll>
                <Track $h={12}>
                  <Thumb $w={2000} $tone="#cdcdcd" />
                  <TrackArrow $side="right" />
                </Track>
              </MainScroll>
            </GridBox>
            <Summary>
              <span>制单人: 管理员</span>
              <SummaryRight>
                <OwedLabel>本单应收:</OwedLabel>
                <Owed>0</Owed>此前应收 72500<SummaryNote>合计应收 72500</SummaryNote>
              </SummaryRight>
            </Summary>
            <Tabs>
              <Tab $active>表尾信息</Tab>
              <Tab>销售费用</Tab>
            </Tabs>
            <FootForm>
              <SideThumb />
              <FootRow $mb={31}>
                <FootLabel>整单优惠:</FootLabel>
                <Input $w={179}>
                  0
                  <IconTail>
                    <Calculator size={20} strokeWidth={1.4} color="#555" />
                  </IconTail>
                </Input>
              </FootRow>
              <FootRow $mb={15}>
                <FootLabel>用预收款:</FootLabel>
                <Input $w={179}>
                  0
                  <IconTail>
                    <Calculator size={20} strokeWidth={1.4} color="#555" />
                  </IconTail>
                </Input>
                <FootText>预收款余额 0</FootText>
              </FootRow>
              <FootRow $mb={0}>
                <FootLabel>收款信息:</FootLabel>
                <Input $w={179}>
                  <Hint>请选择账户</Hint>
                </Input>
                <FootText />
                <Input $w={180}>0</Input>
              </FootRow>
            </FootForm>
            <ActionBar>
              <ActionButton $w={135} $primary>
                <ActionMain>保存</ActionMain>
              </ActionButton>
              <ActionButton $w={156}>
                <ActionMain>打印单据</ActionMain>
                <ActionSide>
                  <Gear size={22} />
                </ActionSide>
              </ActionButton>
              <ActionButton $w={176}>
                <ActionMain>打印物流单</ActionMain>
                <ActionSide>
                  <Chevron />
                </ActionSide>
              </ActionButton>
              <ActionButton $w={134}>
                <ActionMain>关闭</ActionMain>
              </ActionButton>
            </ActionBar>
          </Sheet>
          <Scrim />
          <Note $x={60} $y={47}>业务类型选择委托销售</Note>
          <Note $x={549} $y={45}>选择购买单位</Note>
          <Note $x={811} $y={43}>选择发货仓库</Note>
          <Note $x={190} $y={339}>选择委托结算商品明细</Note>
          <Dialog>
            <DialogHead>
              <DialogTitle>商品SKU选择框</DialogTitle>
              <CloseButton>
                <X size={20} strokeWidth={2.2} />
              </CloseButton>
            </DialogHead>
            <DialogBody>
              <Rail>
                <RailTab $active>
                  <span>商</span>
                  <span>品</span>
                </RailTab>
                <RailTab>
                  <span>套</span>
                  <span>餐</span>
                </RailTab>
              </Rail>
              <TreePane>
                <TreeSearch $w={252} $h={45}>
                  <Hint>输入类别名称进行定位</Hint>
                </TreeSearch>
                <TreeRow $selected>
                  <TreeArrow />
                  <FolderIcon />
                  <TreeLabel>全部分类</TreeLabel>
                </TreeRow>
                <TreeRow>
                  <File size={20} strokeWidth={1.3} color="#888" />
                  <TreeLabel>未分类</TreeLabel>
                </TreeRow>
              </TreePane>
              <RightPane>
                <SideHandle>
                  <ChevronLeft size={14} />
                </SideHandle>
                <Filters>
                  <Input $w={179} $h={45}>
                    快速查询
                    <IconTail>
                      <Chevron />
                    </IconTail>
                  </Input>
                  <Input $w={360} $h={45}>
                    <Hint>编号/名称/简名/拼音码/往来单位商品编号</Hint>
                  </Input>
                  <Input $w={179} $h={45}>
                    全部
                    <IconTail>
                      <Chevron />
                    </IconTail>
                  </Input>
                  <GhostButton $w={80}>查询</GhostButton>
                  <Spacer />
                  <GhostButton $w={52}>新增</GhostButton>
                </Filters>
                <Panel $h={394}>
                  <Row $h={52} $tone="head">
                    <Cell $w={skuCols[0]} $head>
                      <Gear />
                    </Cell>
                    <Cell $w={skuCols[1]} $head>
                      <Box $dash>-</Box>
                    </Cell>
                    <Cell $w={skuCols[2]} $head>规格</Cell>
                    <Cell $w={skuCols[3]} $head>图片</Cell>
                    <Cell $w={skuCols[4]} $head>商品编号</Cell>
                    <Cell $w={skuCols[5]} $head>商品名称</Cell>
                    <Cell $w={skuCols[6]} $head>仓内库存</Cell>
                    <Cell $w={skuCols[7]} $head>型号</Cell>
                    <Cell $w={skuCols[8]} $head />
                  </Row>
                  {skuRows.map((r) => (
                    <Row key={r.code} $h={53} $tone={r.current ? 'current' : undefined}>
                      <Cell $w={skuCols[0]}>{r.current ? <Pointer /> : r.no}</Cell>
                      <Cell $w={skuCols[1]}>
                        <Box $on={r.current}>{r.current && <Check size={18} strokeWidth={2} />}</Box>
                      </Cell>
                      <Cell $w={skuCols[2]} />
                      <Cell $w={skuCols[3]}>
                        <Picture />
                      </Cell>
                      <Cell $w={skuCols[4]} $left>{r.code}</Cell>
                      <Cell $w={skuCols[5]} $left>{r.name}</Cell>
                      <Cell $w={skuCols[6]} $left>{r.stock}</Cell>
                      <Cell $w={skuCols[7]} />
                      <Cell $w={skuCols[8]} />
                    </Row>
                  ))}
                  <GridFill>
                    <RedNote>未结算的委托出库商品会在商品明细显示，选择需要结算的委托出库商品，填写数量价格结算即可</RedNote>
                  </GridFill>
                  <Scroll thumb={960} />
                  <PagerRow $h={37}>
                    共 3 条记录 每页显示
                    <PageSize $w={77} $h={32}>
                      20
                      <IconTail>
                        <Chevron />
                      </IconTail>
                    </PageSize>
                    条
                  </PagerRow>
                </Panel>
                <DetailHead>
                  <DownHandle>
                    <ChevronDown size={13} />
                  </DownHandle>
                  商品详情
                </DetailHead>
                <Panel $h={318}>
                  <Row $h={53} $tone="head">
                    <Cell $w={d[0]} $head>
                      <Gear />
                    </Cell>
                    <Cell $w={d[1]} $head>操作</Cell>
                    <Cell $w={d[2]} $head>
                      <Pen />
                      数量
                    </Cell>
                    <Cell $w={d[3]} $head>
                      <Pen />
                      副单位数量
                    </Cell>
                    <Cell $w={d[4]} $head>销售默认...</Cell>
                    <Cell $w={d[5]} $head>副单位名</Cell>
                    <Cell $w={d[6]} $head>仓内库存</Cell>
                    <Cell $w={d[7]} $head>零售价</Cell>
                    <Cell $w={d[8]} $head $left>图片</Cell>
                  </Row>
                  <Row $h={53} $tone="current">
                    <Cell $w={d[0]}>
                      <Pointer />
                    </Cell>
                    <Cell $w={d[1]}>
                      <FilePlus2 size={20} strokeWidth={1.4} color="#444" />
                    </Cell>
                    <Cell $w={d[2]}>
                      <StepInput />
                    </Cell>
                    <Cell $w={d[3]}>
                      <StepInput />
                    </Cell>
                    <Cell $w={d[4]} />
                    <Cell $w={d[5]} />
                    <Cell $w={d[6]} $left>700</Cell>
                    <Cell $w={d[7]} $left>0</Cell>
                    <Cell $w={d[8]} $left>
                      <Picture />
                    </Cell>
                  </Row>
                  <GridFill />
                  <Scroll thumb={628} />
                  <RecordCount $h={39}>共 1 条记录</RecordCount>
                </Panel>
              </RightPane>
            </DialogBody>
            <DialogFoot>
              <FootButton $primary>确认</FootButton>
              <FootButton>取消</FootButton>
            </DialogFoot>
          </Dialog>
        </Content>
      </Main>
    </Shell>
  )
}

export default App
